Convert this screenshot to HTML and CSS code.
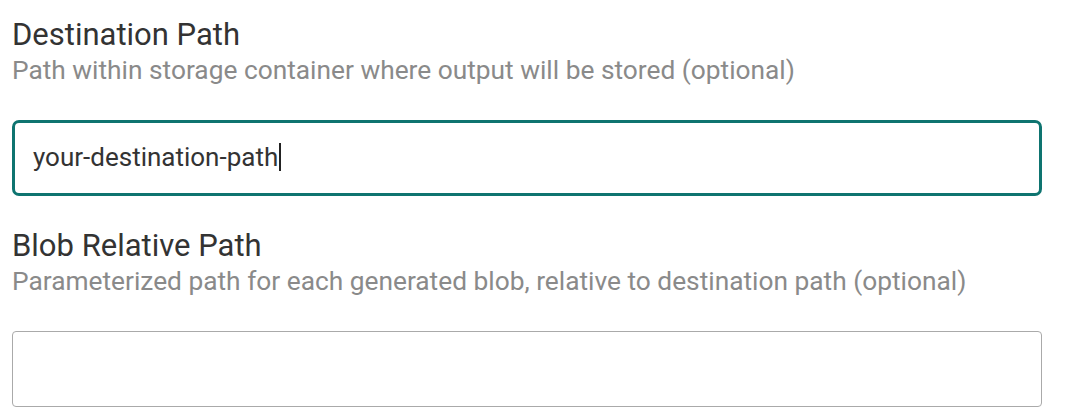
FILE: index.html
```html
<!DOCTYPE html>
<html lang="en">
<head>
    <meta charset="UTF-8">
    <meta name="viewport" content="width=device-width, initial-scale=1.0">
    <title>Output Settings</title>
    <link rel="stylesheet" href="styles.css">
</head>
<body>
    <div class="field">
        <label class="field-label" for="destPath">Destination Path</label>
        <div class="field-hint">Path within storage container where output will be stored (optional)</div>
        <div class="input focused">
            <span class="input-value">your-destination-path</span><span class="caret"></span>
        </div>
    </div>

    <div class="field">
        <label class="field-label" for="blobPath">Blob Relative Path</label>
        <div class="field-hint">Parameterized path for each generated blob, relative to destination path (optional)</div>
        <div class="input"></div>
    </div>
</body>
</html>
```

FILE: styles.css
```css
body {
    margin: 0;
    padding: 16px 28px 0 12px;
    font-family: Roboto, "Liberation Sans", sans-serif;
    background: #fff;
}
.field {
    display: flex;
    flex-direction: column;
    margin-bottom: 31px;
}
.field-label {
    font-size: 31px;
    line-height: 37px;
    color: #333;
}
.field-hint {
    font-size: 26.3px;
    line-height: 34px;
    color: #8a8a8a;
}
.input {
    display: flex;
    align-items: center;
    box-sizing: border-box;
    height: 76px;
    margin-top: 33px;
    padding: 0 17px 3px 18px;
    border: 1px solid #aaa;
    border-radius: 4px;
}
.input.focused {
    border: 3px solid #0e7470;
    border-radius: 7px;
}
.input-value {
    font-size: 26px;
    color: #333;
}
.caret {
    width: 2px;
    height: 28px;
    margin-left: 1px;
    background: #222;
}
```
